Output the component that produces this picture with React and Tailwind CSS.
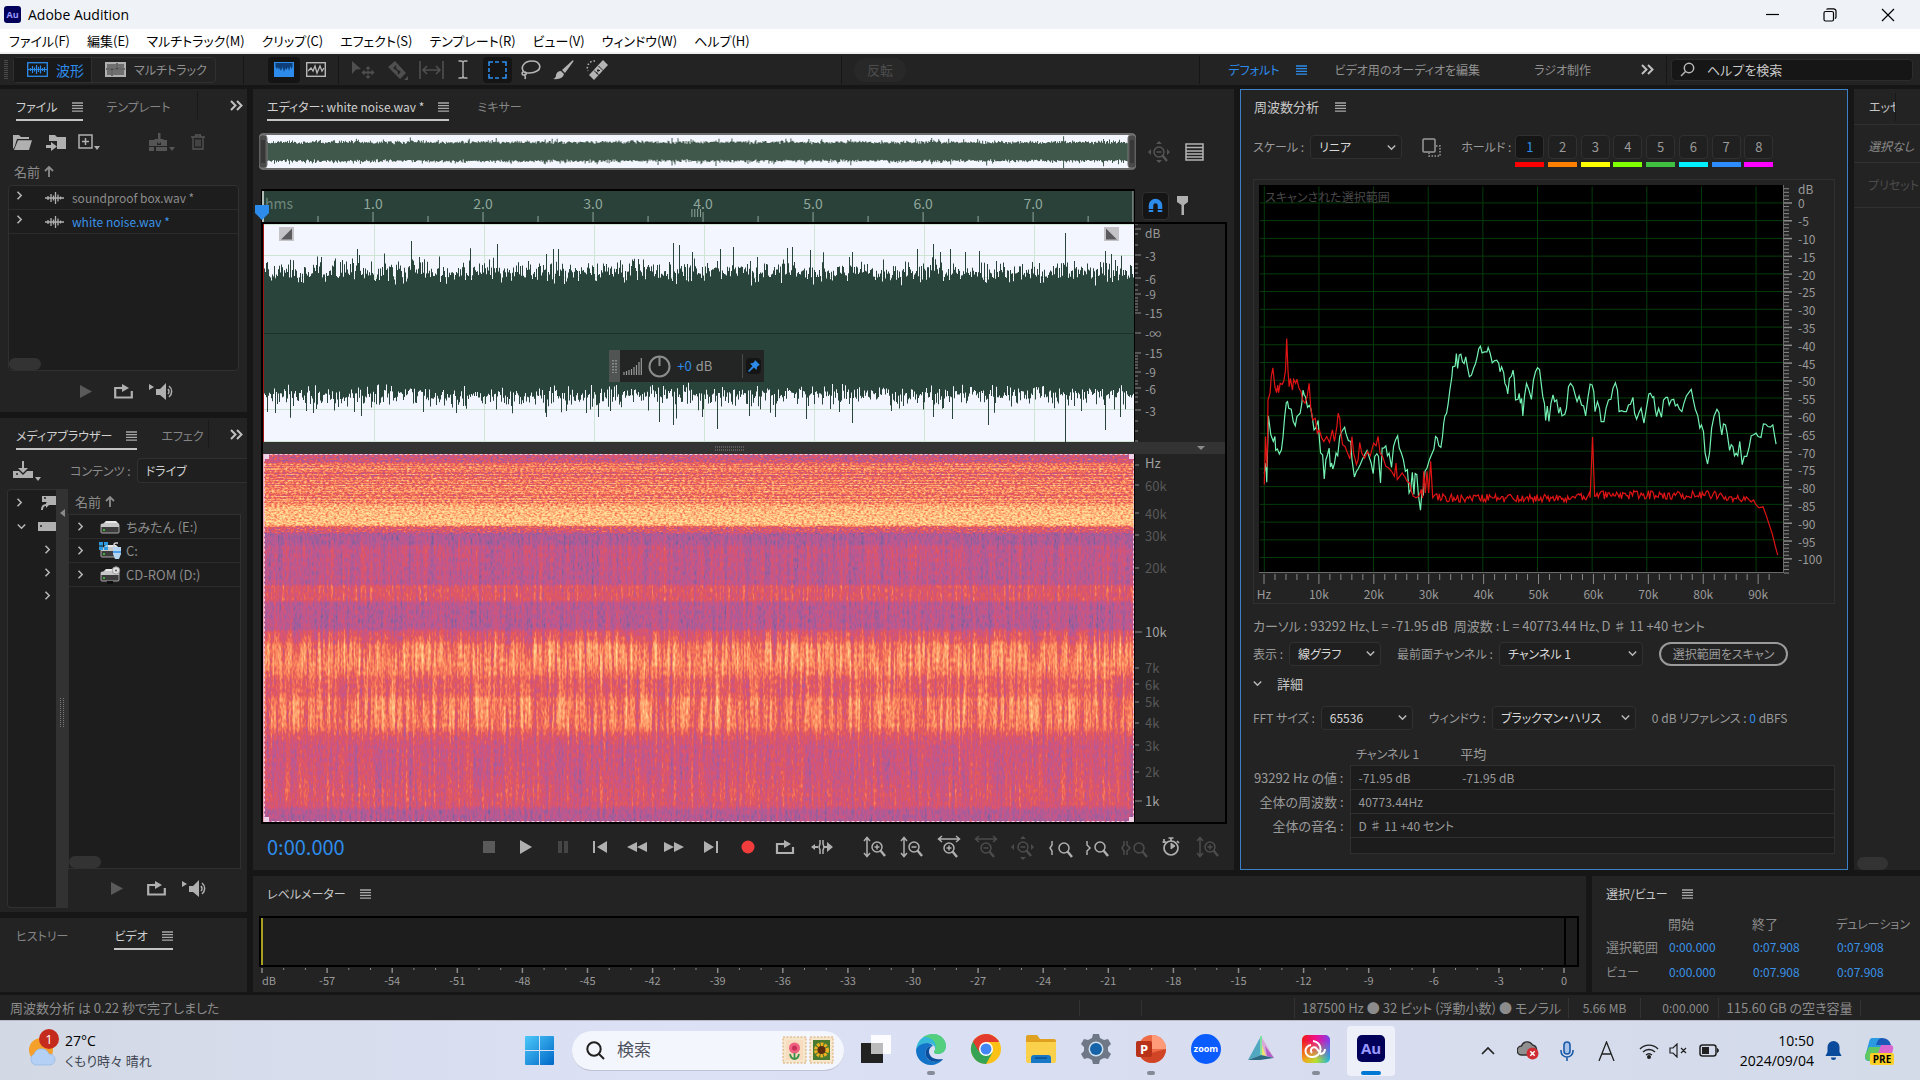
import React from "react";

/* ---------- data ---------- */

function makeRandom(seed) {
  let s = seed;
  return () => {
    s = (s * 1664525 + 1013904223) % 4294967296;
    return s / 4294967296;
  };
}

const SPIKES_UP = { 43: 224, 147: 240, 233: 243, 282: 253, 289: 248, 294: 248, 409: 242, 415: 244, 428: 251, 456: 248, 523: 247, 528: 246, 546: 249, 588: 251, 653: 248, 669: 243, 686: 248, 715: 250, 801: 232, 841: 250 };
const SPIKES_DOWN = { 42: 410, 49: 412, 90: 411, 159: 411, 192: 412, 282: 416, 322: 412, 334: 416, 395: 421, 409: 424, 438: 416, 453: 428, 485: 415, 511: 416, 542: 418, 588: 422, 669: 416, 688: 418, 724: 424, 801: 441, 841: 429, 856: 416 };

function waveformPath() {
  const rnd = makeRandom(77);
  let top = "M0 109";
  let bottom = "";
  for (let x = 0; x < 870; x++) {
    const a = rnd() + rnd() + rnd();
    const b = rnd();
    let y = 49 + (a - 1.5) * 10 - Math.pow(b, 8) * 16;
    if (SPIKES_UP[x] && x > 50) y = SPIKES_UP[x] - 223;
    top += `L${x} ${y.toFixed(1)}L${x + 1} ${y.toFixed(1)}`;
    const c = rnd() + rnd() + rnd();
    const d = rnd();
    let z = 170 + (c - 1.5) * 9 + Math.pow(d, 8) * 17;
    if (SPIKES_DOWN[x]) z = SPIKES_DOWN[x] - 223;
    bottom = `L${x + 1} ${z.toFixed(1)}L${x} ${z.toFixed(1)}` + bottom;
  }
  return `${top}${bottom}Z`;
}
const WAVE = waveformPath();

function spectrogramStripes() {
  const rnd = makeRandom(5);
  const out = [];
  for (let y = 11; y < 50; y += 1) {
    const v = rnd();
    out.push({ y, light: v > 0.5, o: Math.abs(v - 0.5) * 0.5 });
  }
  return out;
}
const STRIPES = spectrogramStripes();

const GREEN =
  "62,912 66,880 68,938 72,738 78,795 84,815 88,800 90,842 94,838 99,853 104,840 108,800 112,740 116,698 119,695 122,715 128,718 133,755 138,768 142,740 150,730 154,700 157,660 160,675 163,680 168,712 172,706 176,716 180,745 184,780 188,775 194,752 196,790 200,850 205,855 209,928 213,870 217,855 221,835 224,892 227,880 230,898 234,882 238,850 242,858 247,800 252,785 259,772 262,790 268,812 274,815 277,870 283,922 288,905 292,898 297,885 303,868 308,855 314,842 320,865 324,880 329,912 333,860 338,852 342,860 347,940 351,835 355,835 360,828 364,858 368,850 374,893 379,830 384,810 389,798 393,835 398,850 403,870 408,905 413,900 417,970 421,960 425,908 429,975 432,912 436,915 440,978 445,1022 449,960 452,978 456,905 461,895 467,870 472,855 478,838 482,800 486,805 490,828 495,833 499,800 502,760 505,738 509,730 513,700 517,660 522,620 524,590 530,588 533,550 536,595 540,555 544,552 548,575 552,580 556,560 560,590 565,620 570,615 575,595 580,580 584,560 588,535 592,528 596,548 602,545 608,545 611,532 616,550 621,578 626,572 632,570 637,580 640,605 644,590 649,608 652,640 656,650 659,672 663,625 668,618 672,600 675,625 678,690 684,688 687,670 690,700 693,685 696,738 700,680 705,640 711,660 717,688 722,630 727,605 732,593 737,598 741,640 745,680 749,700 752,752 756,708 760,755 765,700 770,675 774,695 779,690 784,730 788,712 792,738 799,733 803,715 808,650 813,640 819,650 825,678 829,695 834,678 840,705 845,708 850,738 856,680 861,642 866,645 870,665 873,725 879,695 884,715 888,755 895,755 900,715 906,690 912,688 917,655 923,638 928,660 932,725 938,722 944,725 950,725 955,705 960,703 966,682 970,730 975,748 981,728 986,715 993,760 999,715 1005,672 1009,670 1014,683 1017,680 1021,720 1024,740 1029,715 1036,742 1041,690 1047,682 1051,682 1055,705 1060,690 1066,688 1070,708 1075,703 1080,718 1086,725 1091,700 1097,678 1103,668 1109,658 1114,690 1119,718 1125,738 1130,775 1134,765 1139,785 1143,850 1149,883 1154,848 1159,775 1165,738 1172,718 1177,728 1180,765 1184,795 1188,762 1193,765 1197,790 1203,842 1207,825 1211,830 1215,858 1219,850 1223,858 1228,815 1234,885 1239,860 1245,860 1251,832 1256,798 1262,795 1268,790 1273,800 1280,803 1286,762 1292,763 1297,770 1303,772 1309,765 1313,795 1317,823";

function redCurve() {
  const rnd = makeRandom(31);
  const head =
    "62,945 65,800 68,893 70,820 71,690 76,670 79,620 83,593 88,650 92,668 95,645 97,668 101,640 106,643 110,632 114,600 117,505 120,600 123,650 126,625 131,660 134,628 139,640 142,627 147,655 152,665 156,690 162,700 167,680 172,640 176,715 181,750 187,745 192,790 197,780 203,805 208,815 215,800 222,818 229,780 234,815 240,770 243,730 247,745 250,790 254,825 260,830 266,850 272,868 277,800 281,850 288,885 292,870 296,818 301,850 308,865 315,845 322,858 330,820 336,828 341,800 346,850 352,860 360,890 367,895 374,905 381,920 385,880 388,930 394,920 400,910 407,922 412,935 418,940 422,962 427,980 434,985 441,980 447,960 450,985 453,905 457,970 461,905 465,970 470,875 475,985";
  const mid = [];
  for (let x = 479; x < 1245; x += 3) {
    if (x > 860 && x < 874) continue;
    const base = x < 860 ? 985 : x < 1160 ? 976 : 976 + (x - 1160) / 5;
    mid.push([x, Math.round(base + (rnd() - 0.5) * 26)]);
  }
  mid.push([861, 985], [867, 802], [872, 980]);
  mid.sort((p, q) => p[0] - q[0]);
  const tail = "1250,990 1256,997 1262,991 1267,1005 1275,1015 1285,1012 1292,1035 1300,1065 1308,1095 1316,1135 1321,1157";
  return `${head} ${mid.map((p) => p.join(",")).join(" ")} ${tail}`;
}
const RED = redCurve();

/* ---------- small pieces ---------- */

const MenuIcon = ({ className = "" }) => (
  <svg className={`shrink-0 ${className}`} width="11" height="10" viewBox="0 0 11 10" stroke="currentColor" strokeWidth="1.3" aria-hidden="true">
    <path d="M0 1h11M0 3.7h11M0 6.4h11M0 9.1h11" />
  </svg>
);

const MoreIcon = () => (
  <svg width="13" height="11" viewBox="0 0 13 11" fill="none" stroke="#c0c0c0" strokeWidth="2">
    <path d="M1 1l4.5 4.5L1 10M7 1l4.5 4.5L7 10" />
  </svg>
);

const Chevron = ({ down }) => (
  <svg className="shrink-0" width="9" height="9" viewBox="0 0 9 9" fill="none" stroke="#b8b8b8" strokeWidth="1.5">
    <path d={down ? "M0.8 2.5l3.7 3.7 3.7-3.7" : "M2.5 0.8l3.7 3.7-3.7 3.7"} />
  </svg>
);

const SortArrow = () => (
  <svg width="10" height="11" viewBox="0 0 10 11" fill="none" stroke="#8c8c8c" strokeWidth="1.8">
    <path d="M5 11V1.5M1 5l4-4 4 4" />
  </svg>
);

const FileWave = () => (
  <svg width="19" height="12" viewBox="0 0 19 12" stroke="#b0b0b0" strokeWidth="1.3">
    <path d="M0 6h19M3 4v4M6 2v8M8.500 3.500v5M10.500 0v12M13 2.500v7M15.500 4.500v3" />
  </svg>
);

const PlayIcon = ({ dim }) => (
  <svg width="12" height="13" viewBox="0 0 12 13" fill={dim ? "#5a5a5a" : "#b0b0b0"}>
    <path d="M0 0l12 6.500L0 13z" />
  </svg>
);

const LoopIcon = () => (
  <svg width="19" height="15" viewBox="0 0 19 15">
    <path d="M6 4H1.200v9.500h16.600V7" fill="none" stroke="#b0b0b0" strokeWidth="2.200" />
    <path d="M5 4h4" stroke="#b0b0b0" strokeWidth="2.200" />
    <path d="M8 0l7 4-7 4z" fill="#b0b0b0" />
  </svg>
);

const SpeakerIcon = () => (
  <svg width="27" height="17" viewBox="0 0 27 17">
    <path d="M0 1l5 3-5 3zM7 6h4l6-6v17l-6-5H7z" fill="#b0b0b0" />
    <path d="M19 6a4 4 0 010 5M20 3a7 7 0 010 11" fill="none" stroke="#b0b0b0" strokeWidth="1.500" />
  </svg>
);

function Dropdown({ id, label, value, className }) {
  return (
    <div className="flex items-center gap-[6px] text-[12px]">
      <label htmlFor={id} className="whitespace-nowrap">{label}</label>
      <div className={`relative h-6 ${className}`}>
        <select id={id} className="h-full w-full appearance-none rounded-sm border border-[#303030] bg-[#1f1f1f] pl-2 leading-4 text-[#d8d8d8]">
          <option>{value}</option>
        </select>
        <span className="pointer-events-none absolute inset-y-0 right-1.5 flex items-center">
          <Chevron down />
        </span>
      </div>
    </div>
  );
}

function Tab({ children, active, menu, className = "" }) {
  return (
    <button className={`flex h-8 shrink-0 items-center gap-[14px] whitespace-nowrap border-b-2 pt-1.5 text-[12px] ${active ? "border-[#c4c4c4] text-[#d0d0d0]" : "border-transparent text-[#858585]"} ${className}`}>
      {children}
      {menu && <MenuIcon className="text-[#a8a8a8]" />}
    </button>
  );
}

const Title = ({ children, small }) => (
  <h2 className={`flex items-center whitespace-nowrap text-[#c8c8c8] ${small ? "gap-[14px] text-[12px]" : "gap-4"}`}>
    {children}
    <MenuIcon className="text-[#a8a8a8]" />
  </h2>
);

/* ---------- title, menu and tool bars ---------- */

function TitleBar() {
  return (
    <header className="flex h-[29px] shrink-0 items-center justify-between bg-[#eff3f8] font-['Open_Sans'] text-black">
      <div className="flex items-center gap-[7px] pl-1">
        <svg width="17" height="17" viewBox="0 0 17 17">
          <rect width="17" height="17" rx="3" fill="#00005b" />
          <text x="8.500" y="12" textAnchor="middle" fontSize="9" fontWeight="700" fill="#9999ff" fontFamily="Open Sans">Au</text>
        </svg>
        <h1 className="text-sm">Adobe Audition</h1>
      </div>
      <div className="flex items-center gap-11 pr-[25px]">
        <button aria-label="最小化">
          <svg width="13" height="13" viewBox="0 0 13 13" stroke="#000" strokeWidth="1.200"><path d="M0 6.500h13" /></svg>
        </button>
        <button aria-label="元に戻す">
          <svg width="14" height="14" viewBox="0 0 14 14" fill="none" stroke="#000" strokeWidth="1.200">
            <rect x="1" y="3.500" width="9.500" height="9.500" rx="1.500" />
            <path d="M3.500 1.500Q4 0.800 5 0.800h5.500a2.500 2.500 0 012.500 2.500V9q0 1-1 1.500" />
          </svg>
        </button>
        <button aria-label="閉じる">
          <svg width="14" height="14" viewBox="0 0 14 14" stroke="#000" strokeWidth="1.200"><path d="M1 1l12 12M13 1L1 13" /></svg>
        </button>
      </div>
    </header>
  );
}

function MenuBar() {
  const items = ["ファイル(F)", "編集(E)", "マルチトラック(M)", "クリップ(C)", "エフェクト(S)", "テンプレート(R)", "ビュー(V)", "ウィンドウ(W)", "ヘルプ(H)"];
  return (
    <nav className="flex h-[25px] shrink-0 items-center gap-[17px] border-b-2 border-[#f0f0f0] bg-white pl-[9px] text-[13px] text-black">
      {items.map((t) => (
        <button key={t} className="whitespace-nowrap">{t}</button>
      ))}
    </nav>
  );
}

const ToolSep = ({ className = "" }) => <span className={`h-7 w-px shrink-0 bg-[#161616] ${className}`} />;

function ToolBar() {
  return (
    <div className="flex h-[31px] shrink-0 items-center bg-[#232323] text-[14px]">
      <svg className="ml-1 shrink-0" width="4" height="20" viewBox="0 0 4 20"><path d="M2 0v20" stroke="#4a4a4a" strokeWidth="4" strokeDasharray="1 1" /></svg>
      <div className="ml-[5px] flex h-[26px] shrink-0 rounded border border-[#303030]">
        <button className="flex w-[77px] items-center gap-2 bg-[#191919] pl-[13px] text-[#2d8ceb]">
          <svg width="21" height="15" viewBox="0 0 21 15" fill="none" stroke="currentColor">
            <rect x="0.700" y="0.700" width="19.600" height="13.600" strokeWidth="1.300" />
            <path d="M1 7.500h19M3.500 6v3M5.500 4v7M7.500 5.500v4M9.500 3v9M11.500 5v5M13.500 3.500v8M15.500 6v3M17.500 5v5" strokeWidth="1.200" />
          </svg>
          波形
        </button>
        <button className="flex w-[124px] items-center gap-2 whitespace-nowrap border-l border-[#303030] pl-[13px] text-[12px] text-[#909090]">
          <svg className="shrink-0" width="21" height="15" viewBox="0 0 21 15">
            <rect width="21" height="15" fill="#b0b0b0" />
            <path d="M2 2h9v4H2zM13 2h6v4h-6zM2 8h4v5H2zM8 8h11v5H8z" fill="#707070" />
            <path d="M1 7h19M12 1v6M7 7v7" stroke="#1e1e1e" />
          </svg>
          マルチトラック
        </button>
      </div>
      <ToolSep className="ml-[27px]" />
      <button aria-label="スペクトル周波数" className="ml-6 flex h-[26px] w-8 shrink-0 items-center justify-center rounded bg-[#141414]">
        <svg width="20" height="15" viewBox="0 0 20 15">
          <rect x="0.700" y="0.700" width="18.600" height="13.600" fill="#2d8ceb" stroke="#2d8ceb" strokeWidth="1.400" />
          <path d="M1.500 1h17v4l-1 2-1-3-1.500 5-1-4-1.500 3-1-2-1.500 4-1.500-5-1.500 4-1.500-3L5 8 4 5 3 7 1.500 5z" fill="#0f3f78" />
        </svg>
      </button>
      <button aria-label="スペクトルピッチ" className="ml-[6px] shrink-0">
        <svg width="20" height="15" viewBox="0 0 20 15" fill="none" stroke="#b8b8b8">
          <rect x="0.700" y="0.700" width="18.600" height="13.600" strokeWidth="1.400" />
          <path d="M2 9l3-3 2 3 2-5 2 7 3-7 2 5 2-3" strokeWidth="1.300" />
        </svg>
      </button>
      <ToolSep className="ml-3" />
      <div className="ml-3 flex shrink-0 items-center">
        <button aria-label="移動" className="w-9">
          <svg width="24" height="18" viewBox="0 0 24 18" fill="#4f4f4f">
            <path d="M1 0l9 8-5 .5L1 13z" />
            <path d="M17 5l2.500 3h-2v2.500h3v-2l3 3-3 3v-2h-3V15h2L17 18l-2.500-3h2v-2.500h-3v2l-3-3 3-3v2h3V8h-2z" />
          </svg>
        </button>
        <button aria-label="切り取り" className="w-8">
          <svg width="22" height="20" viewBox="0 0 22 20"><path d="M1 7l7-6 11 12-6 6z" fill="#4f4f4f" /><path d="M7 7l6 6M9 6l-2 3M13 11l-2 3" stroke="#232323" strokeWidth="1.500" /><path d="M21 16v4h-4z" fill="#4f4f4f" /></svg>
        </button>
        <button aria-label="スリップ" className="w-7">
          <svg width="25" height="18" viewBox="0 0 25 18" fill="none" stroke="#4f4f4f" strokeWidth="1.600"><path d="M1 0v18M24 0v18M4 9h17M8 5L4 9l4 4M17 5l4 4-4 4" /></svg>
        </button>
        <button aria-label="時間選択" className="w-8">
          <svg className="mx-auto" width="10" height="19" viewBox="0 0 10 19" fill="none" stroke="#b4b4b4" strokeWidth="1.400"><path d="M0.500 1H3q2 0 2 2 0-2 2-2h2.500M5 3v13M0.500 18H3q2 0 2-2 0 2 2 2h2.500" /></svg>
        </button>
        <button aria-label="長方形選択" className="ml-1 flex h-[26px] w-[29px] items-center justify-center rounded bg-[#151515]">
          <svg width="19" height="18" viewBox="0 0 19 18" fill="none" stroke="#2d8ceb" strokeWidth="1.600"><path d="M1 5V1h4M7 1h4M14 1h4v4M18 7v4M18 13v4h-4M11 17H7M5 17H1v-4M1 11V7" /></svg>
        </button>
        <button aria-label="なげなわ選択" className="ml-2">
          <svg width="22" height="20" viewBox="0 0 22 20" fill="none" stroke="#b4b4b4" strokeWidth="1.600"><path d="M5 13C-1 8 4 1 12 1s10 7 5 10-11 2-13 1-3 3 0 3 3-3 1-3M4 15q2 1 1 4" /></svg>
        </button>
        <button aria-label="ブラシ" className="ml-[11px]">
          <svg width="21" height="20" viewBox="0 0 21 20" fill="#b4b4b4"><path d="M20 0q1 1 0 2l-8 11-3-3zM8 11l3 3q-1 6-11 5 3-1 3-4 1-4 5-4z" /></svg>
        </button>
        <button aria-label="スポット修復" className="ml-3">
          <svg width="23" height="20" viewBox="0 0 23 20"><path d="M17 0l5 5-14 15-5-5z" fill="#b4b4b4" /><path d="M12.500 6l4.500 4.500M8 10.500l5 5" stroke="#232323" /><path d="M12 9v3M11 10.500h3M10 12.500l2 1" stroke="#232323" /><path d="M9 1a7 7 0 00-7 10" fill="none" stroke="#b4b4b4" strokeWidth="1.500" strokeDasharray="1.500 2" /></svg>
        </button>
      </div>
      <ToolSep className="ml-[232px]" />
      <button className="ml-3 h-6 shrink-0 rounded-full bg-[#282828] px-[13px] text-[13px] text-[#4c4c4c]">反転</button>
      <ToolSep className="ml-auto" />
      <button className="ml-[28px] flex shrink-0 items-center gap-4 whitespace-nowrap text-[12px] text-[#2d8ceb]">
        デフォルト<MenuIcon />
      </button>
      <button className="ml-7 shrink-0 whitespace-nowrap text-[12px] text-[#909090]">ビデオ用のオーディオを編集</button>
      <button className="ml-[54px] shrink-0 whitespace-nowrap text-[12px] text-[#909090]">ラジオ制作</button>
      <button aria-label="その他" className="ml-[50px] shrink-0"><MoreIcon /></button>
      <ToolSep className="ml-3" />
      <label className="ml-1 mr-[7px] flex h-[22px] w-[242px] items-center gap-3 rounded-sm border border-[#2c2c2c] bg-[#161616] pl-2">
        <svg className="shrink-0" width="15" height="15" viewBox="0 0 15 15" fill="none" stroke="#b8b8b8" strokeWidth="1.500"><circle cx="9" cy="6" r="4.700" /><path d="M5.500 9.500L1 14" /></svg>
        <input type="text" aria-label="ヘルプを検索" placeholder="ヘルプを検索" className="w-full bg-transparent text-[13px] placeholder:text-[#c8c8c8]" />
      </label>
    </div>
  );
}

/* ---------- left column ---------- */

function FilesPanel() {
  return (
    <section className="flex h-[323px] flex-col bg-[#232323]">
      <div className="flex items-center pl-4 pr-1">
        <Tab active menu>ファイル</Tab>
        <Tab className="ml-6">テンプレート</Tab>
        <span className="ml-auto h-7 w-px bg-[#191919]" />
        <button aria-label="その他のタブ" className="ml-8"><MoreIcon /></button>
      </div>
      <div className="mt-[11px] flex h-5 items-center pl-[13px]">
        <button aria-label="ファイルを開く">
          <svg width="19" height="15" viewBox="0 0 19 15" fill="#b0b0b0"><path d="M0 0h6l2 2h8v2H4L1.500 12 0 14zM5 5.200h14L16 15H1z" /></svg>
        </button>
        <button aria-label="読み込み" className="ml-3.5">
          <svg width="20" height="17" viewBox="0 0 20 17" fill="#b0b0b0"><path d="M3 1h6l2 2h9v12h-9V7H3z" /><path d="M0 11h5V8l6 4.500L5 17v-3H0z" /></svg>
        </button>
        <button aria-label="新規ファイル" className="ml-3">
          <svg width="22" height="16" viewBox="0 0 22 16"><path d="M1 1h13v13H1zM7.500 4v7M4 7.500h7" fill="none" stroke="#b0b0b0" strokeWidth="1.500" /><path d="M16 12h6l-3 4z" fill="#b0b0b0" /></svg>
        </button>
        <button aria-label="マルチトラックに挿入" className="ml-auto">
          <svg width="26" height="19" viewBox="0 0 26 19" fill="#555"><path d="M0 7h8v5h4V7h6v6H0zM0 14h5v4H0zM7 14h11v4H7zM9 0h2.500v6h3.500l-5 5-5-5h4zM20 14h6l-3 4z" /></svg>
        </button>
        <button aria-label="削除" className="ml-4 mr-[42px]">
          <svg width="14" height="16" viewBox="0 0 14 16" fill="none" stroke="#555" strokeWidth="1.300"><path d="M0 3h14M4.500 3V1h5v2M2 3v12h10V3M5 5.500v7M7 5.500v7M9 5.500v7" /></svg>
        </button>
      </div>
      <div className="mt-[6px] flex h-[27px] items-center gap-1 pl-[14px] text-[#8c8c8c]">名前<SortArrow /></div>
      <div className="mx-2 flex min-h-0 flex-1 flex-col rounded-sm border border-[#303030] bg-[#1d1d1d]">
        {["soundproof box.wav *", "white noise.wav *"].map((name, i) => (
          <button key={name} className="flex h-6 shrink-0 items-center border-b border-[#2b2b2b] pl-[6px] text-[12px]">
            <span className="mb-1 flex"><Chevron /></span>
            <span className="ml-[21px] mr-2"><FileWave /></span>
            <span className={i === 1 ? "text-[#3a92e8]" : "text-[#8c8c8c]"}>{name}</span>
          </button>
        ))}
        <span className="mt-auto h-3 w-8 rounded-full bg-[#333]" />
      </div>
      <div className="flex h-[41px] items-center gap-[22px] pl-20">
        <button aria-label="再生"><PlayIcon dim /></button>
        <button aria-label="ループ"><LoopIcon /></button>
        <button aria-label="自動再生" className="-ml-1.5"><SpeakerIcon /></button>
      </div>
    </section>
  );
}

const DriveIcon = ({ kind }) => (
  <svg width="22" height="18" viewBox="0 0 22 18">
    <path d="M4 6l3-3h10l3 3z" fill="#e8e8e8" />
    <rect x="2" y="6" width="18" height="9" rx="1" fill="#3c3c3c" stroke="#a8a8a8" />
    <path d="M2 6h18v3H2z" fill="#c8c8c8" />
    <path d="M5 11v2" stroke="#40d040" strokeWidth="1.500" />
    {kind === "c" && (
      <g>
        <path d="M0 0h4v3.500H0zM5 0h4v3.500H5zM0 4.500h4V8H0zM5 4.500h4V8H5z" fill="#2d9be0" />
        <path d="M15 7V3q0-2 2-2h2" stroke="#d0d0d0" strokeWidth="1.500" fill="none" />
        <path d="M14 5h8v7l-2 5h-4l-2-5z" fill="#b4d4f0" />
        <path d="M14 10h8" stroke="#2d8ceb" strokeWidth="1.500" />
      </g>
    )}
    {kind === "cd" && (
      <g>
        <circle cx="17" cy="4.500" r="3.700" fill="#e0e0e0" stroke="#999" />
        <circle cx="17" cy="4.500" r="1" fill="#555" />
        <path d="M8 15h6v3H8z" fill="#101010" />
      </g>
    )}
  </svg>
);

function MediaPanel() {
  const drives = [["ちみたん (E:)", "e"], ["C:", "c"], ["CD-ROM (D:)", "cd"]];
  return (
    <section className="flex min-h-0 flex-1 flex-col bg-[#232323]">
      <div className="flex items-center pl-4 pr-1">
        <Tab active menu>メディアブラウザー</Tab>
        <Tab className="ml-6">エフェク</Tab>
        <span className="ml-1 h-7 w-px bg-[#191919]" />
        <button aria-label="その他のタブ" className="ml-auto"><MoreIcon /></button>
      </div>
      <div className="mt-2 flex h-[25px] items-center overflow-hidden text-[12px] text-[#8c8c8c]">
        <button aria-label="ダウンロード" className="ml-[13px] mr-[29px]">
          <svg width="28" height="20" viewBox="0 0 28 20"><path d="M0 10h6l4 4 4-4h6v7H0z" fill="#b0b0b0" /><path d="M9 0h2v7h4l-5 5-5-5h4z" fill="#b0b0b0" /><path d="M3 13h2" stroke="#232323" strokeWidth="1.500" /><path d="M22 16h6l-3 4z" fill="#b0b0b0" /></svg>
        </button>
        <label htmlFor="contents" className="shrink-0 whitespace-nowrap">コンテンツ :</label>
        <select id="contents" className="ml-[6px] h-full min-w-0 flex-1 appearance-none rounded-l-sm border border-r-0 border-[#303030] bg-[#1f1f1f] pl-2 leading-4 text-[#d0d0d0]">
          <option>ドライブ</option>
        </select>
      </div>
      <div className="mb-1 mt-[6px] flex min-h-0 flex-1 pl-[7px] pr-[6px]">
        <div className="flex w-[49px] flex-col overflow-hidden rounded-l-sm border border-r-0 border-[#303030] bg-[#1d1d1d]">
          <button aria-label="ショートカット" className="flex h-6 items-center justify-between pl-[7px]">
            <Chevron />
            <svg width="16" height="16" viewBox="0 0 16 16" fill="#b0b0b0"><path d="M2 2h14v9H7V8H2z" /><path d="M4 4h2" stroke="#222" strokeWidth="1.500" /><path d="M1 16q0-6 5-6V8l3 3-3 3v-2q-3 0-3 4z" /></svg>
          </button>
          <button aria-label="ドライブ" className="flex h-6 items-center justify-between pl-[9px]">
            <Chevron down />
            <svg width="18" height="9" viewBox="0 0 18 9"><path d="M0 0h18v9H0z" fill="#b0b0b0" /><path d="M3 3v2" stroke="#222" strokeWidth="1.500" /></svg>
          </button>
          {[0, 1, 2].map((i) => (
            <button key={i} aria-label="展開" className="flex h-[23px] items-center pl-[35px]"><Chevron /></button>
          ))}
        </div>
        <div className="flex w-3 flex-col items-center justify-between bg-[#323232] pt-5">
          <svg width="5" height="8" viewBox="0 0 5 8" fill="#8a8a8a"><path d="M5 0v8L0 4z" /></svg>
          <svg width="6" height="30" viewBox="0 0 6 30"><path d="M1.500 0v30M4.500 0v30" stroke="#777" strokeWidth="1" strokeDasharray="1 1" /></svg>
          <span />
        </div>
        <div className="flex min-w-0 flex-1 flex-col">
          <div className="flex h-[25px] items-center gap-1 pl-[7px] text-[#8c8c8c]">名前<SortArrow /></div>
          <div className="flex min-h-0 flex-1 flex-col border border-[#303030] bg-[#1d1d1d]">
            {drives.map(([name, kind]) => (
              <button key={name} className="flex h-6 shrink-0 items-center border-b border-[#2b2b2b] pl-[7px] text-[#8c8c8c]">
                <Chevron />
                <span className="ml-[14px] mr-[5px]"><DriveIcon kind={kind} /></span>
                {name}
              </button>
            ))}
            <span className="mt-auto h-3 w-8 rounded-full bg-[#333]" />
          </div>
          <div className="flex h-[39px] items-center gap-6 pl-[43px]">
            <button aria-label="再生"><PlayIcon dim /></button>
            <button aria-label="ループ"><LoopIcon /></button>
            <button aria-label="自動再生" className="-ml-2"><SpeakerIcon /></button>
          </div>
        </div>
      </div>
    </section>
  );
}

function HistoryPanel() {
  return (
    <section className="flex h-[74px] items-start bg-[#232323] pl-4">
      <Tab>ヒストリー</Tab>
      <Tab active menu className="ml-[46px]">ビデオ</Tab>
    </section>
  );
}

/* ---------- editor ---------- */

const pct = (v) => `${v.toFixed(3)}%`;

function Overview() {
  return (
    <svg className="h-[37px] min-w-0 flex-1 rounded" viewBox="0 0 878 37" preserveAspectRatio="none">
      <rect x="0" y="0" width="878" height="37" rx="4" fill="#6b6b6b" />
      <rect x="4" y="2" width="870" height="33" fill="#f4f6ff" />
      <g transform="translate(4 2) scale(1 .1514)"><path d={WAVE} fill="#40584c" /></g>
      <rect x="0" y="2" width="8" height="33" rx="3" fill="#4a4a4a" stroke="#777" />
      <rect x="870" y="2" width="8" height="33" rx="3" fill="#4a4a4a" stroke="#777" />
      <path d="M3 7v23M5 7v23M873 7v23M875 7v23" stroke="#1e1e1e" strokeWidth="0.800" />
    </svg>
  );
}

function Ruler() {
  const ticks = Array.from({ length: 15 }, (_, i) => (i + 1) / 2);
  return (
    <div className="relative h-[33px] min-w-0 flex-1 border-2 border-b-0 border-black bg-[#294138]">
      <svg className="h-full w-full overflow-visible text-[14px]" fill="#8fa79d">
        <text x="2" y="18" fill="#6e877c">hms</text>
        {ticks.map((t) => (
          <g key={t}>
            <line x1={pct((t / 7.908) * 100)} x2={pct((t / 7.908) * 100)} y1={Number.isInteger(t) ? 21 : 25} y2="31" stroke="#8fa79d" />
            {Number.isInteger(t) && <text x={pct((t / 7.908) * 100)} y="18" textAnchor="middle">{t.toFixed(1)}</text>}
          </g>
        ))}
        <line x1="0" x2="0" y1="0" y2="31" stroke="#b0bcb6" strokeWidth="2" />
        <line x1="100%" x2="100%" y1="0" y2="31" stroke="#b0bcb6" />
        {[0, 1, 2, 3].map((i) => (
          <line key={i} x1={pct(49.3 + i * 0.33)} x2={pct(49.3 + i * 0.33)} y1="18" y2="26" stroke="#8fa79d" />
        ))}
      </svg>
      <svg className="absolute -left-2 top-[14px]" width="14" height="16" viewBox="0 0 14 16"><path d="M0 0h14v8l-7 7-7-7z" fill="#2d8ceb" /></svg>
    </div>
  );
}

function Waveform() {
  const secs = [1, 2, 3, 4, 5, 6, 7];
  return (
    <svg className="h-full w-full" viewBox="0 0 870 218" preserveAspectRatio="none">
      <rect width="870" height="218" fill="#f4f6ff" />
      <g stroke="#cfe5d4">
        {secs.map((t) => <line key={t} x1={t * 110 + 0.5} x2={t * 110 + 0.5} y1="0" y2="218" />)}
        <path d="M0 31.500h870M0 53.500h870M0 185.500h870M0 .5h870M0 217.500h870" />
      </g>
      <path d={WAVE} fill="#29443a" />
      <path d="M0 109.500h870" stroke="#1c3028" />
      <g>
        <rect x="15" y="3" width="15" height="14" fill="#c4c4c8" />
        <path d="M17 15.500L28 4.500v11z" fill="#5a5a5e" />
        <rect x="840" y="3" width="15" height="14" fill="#c4c4c8" />
        <path d="M842 4.500v11h11z" fill="#5a5a5e" />
      </g>
    </svg>
  );
}

const PALETTE = {
  r: "0.30 0.46 0.62 0.74 0.83 0.89 0.96 1 1 1 1",
  g: "0.33 0.37 0.37 0.35 0.33 0.35 0.46 0.60 0.72 0.84 0.90",
  b: "0.52 0.60 0.61 0.57 0.47 0.36 0.35 0.40 0.50 0.56 0.62",
};

const LEVELS = [
  [0, 38], [8, 38], [10, 61], [30, 60], [48, 66], [54, 80], [68, 84], [71, 80], [73, 48], [78, 42], [80, 25], [90, 27], [93, 34],
  [130, 31], [132, 46], [146, 46], [149, 30], [174, 29], [178, 44], [187, 50], [191, 61], [210, 66], [220, 60], [226, 51],
  [240, 51], [246, 61], [272, 60], [282, 45], [292, 39], [320, 39], [340, 44], [352, 42], [356, 29], [368, 27],
];

function Spectrogram() {
  return (
    <svg className="h-full w-full" viewBox="0 0 870 368" preserveAspectRatio="none">
      <defs>
        <linearGradient id="levels" x1="0" y1="0" x2="0" y2="368" gradientUnits="userSpaceOnUse">
          {LEVELS.map(([y, v]) => <stop key={y} offset={y / 368} stopColor={`rgb(${v}%,${v}%,${v}%)`} />)}
        </linearGradient>
        <filter id="upper" x="0" y="0" width="1" height="1" colorInterpolationFilters="sRGB">
          <feTurbulence type="fractalNoise" baseFrequency="0.37 0.61" numOctaves="2" seed="3" />
          <feColorMatrix values="1.6 0 0 0 -.3  1.6 0 0 0 -.3  1.6 0 0 0 -.3  0 0 0 0 1" result="n" />
          <feComposite in="SourceGraphic" in2="n" operator="arithmetic" k2="1" k3="0.5" k4="-0.25" />
          <feComponentTransfer>
            <feFuncR type="table" tableValues={PALETTE.r} /><feFuncG type="table" tableValues={PALETTE.g} /><feFuncB type="table" tableValues={PALETTE.b} />
          </feComponentTransfer>
        </filter>
        <filter id="lower" x="0" y="0" width="1" height="1" colorInterpolationFilters="sRGB">
          <feTurbulence type="fractalNoise" baseFrequency="0.33 0.014" numOctaves="2" seed="8" />
          <feColorMatrix values="1.4 0 0 0 -.2  1.4 0 0 0 -.2  1.4 0 0 0 -.2  0 0 0 0 1" result="streak" />
          <feTurbulence type="fractalNoise" baseFrequency="0.57 0.23" numOctaves="1" seed="12" />
          <feColorMatrix values="0 1.4 0 0 -.2  0 1.4 0 0 -.2  0 1.4 0 0 -.2  0 0 0 0 1" result="fine" />
          <feComposite in="SourceGraphic" in2="streak" operator="arithmetic" k1="0.85" k2="0.57" k3="0" k4="0" result="s" />
          <feComposite in="s" in2="fine" operator="arithmetic" k2="1" k3="0.3" k4="-0.15" />
          <feComponentTransfer>
            <feFuncR type="table" tableValues={PALETTE.r} /><feFuncG type="table" tableValues={PALETTE.g} /><feFuncB type="table" tableValues={PALETTE.b} />
          </feComponentTransfer>
        </filter>
      </defs>
      <g filter="url(#upper)">
        <rect width="870" height="80" fill="url(#levels)" />
        {STRIPES.map((s) => <rect key={s.y} y={s.y} width="870" height="1" fill={s.light ? "#fff" : "#000"} opacity={s.o} />)}
      </g>
      <g filter="url(#lower)"><rect y="80" width="870" height="288" fill="url(#levels)" /></g>
      <rect x="0.500" y="0.500" width="869" height="367" fill="none" stroke="#f0c8dc" strokeDasharray="3 2" />
      <path d="M0 0h5v5H0zM865 0h5v5h-5zM0 363h5v5H0zM865 363h5v5h-5z" fill="#f0d0e6" />
    </svg>
  );
}

function DbScale() {
  const labels = [["dB", 10, 5], ["-3", 33, 31], ["-6", 56, 54], ["-9", 71, 70], ["-15", 90, 89], ["-∞", 111, 109], ["-15", 130, 129], ["-9", 149, 148], ["-6", 166, 164], ["-3", 188, 186]];
  const small = [0, 10, 21, 40, 44, 49, 61, 66, 74, 77, 80, 83, 86, 132, 135, 138, 141, 144, 152, 157, 160, 169, 173, 178, 197, 207, 217];
  return (
    <svg className="h-full w-full text-[12px]" fill="#9a9a9a">
      {small.map((y) => <line key={y} x1="0" x2="3" y1={pct(y / 2.18)} y2={pct(y / 2.18)} stroke="#8a8a8a" />)}
      {labels.map(([t, y, tick]) => (
        <g key={y}>
          <line x1="0" x2="6" y1={pct(tick / 2.18)} y2={pct(tick / 2.18)} stroke="#8a8a8a" />
          <text x="10" y={pct(y / 2.18)} dy="4">{t}</text>
        </g>
      ))}
    </svg>
  );
}

function HzScale() {
  const labels = [["Hz", 10, 11, 1], ["60k", 33, 31, 0], ["40k", 61, 59, 0], ["30k", 83, 81, 0], ["20k", 115, 114, 0], ["10k", 179, 178, 1], ["7k", 215, 214, 0], ["6k", 232, 230, 0], ["5k", 249, 248, 0], ["4k", 270, 269, 0], ["3k", 293, 291, 0], ["2k", 319, 318, 0], ["1k", 348, 347, 1]];
  return (
    <svg className="h-full w-full text-[13px]">
      {labels.map(([t, y, tick, bright]) => (
        <g key={t}>
          <line x1="0" x2={bright && t !== "Hz" ? 7 : 4} y1={pct(tick / 3.68)} y2={pct(tick / 3.68)} stroke="#8a8a8a" />
          <text x="10" y={pct(y / 3.68)} dy="4" fill={bright ? "#a0a0a0" : "#585858"}>{t}</text>
        </g>
      ))}
    </svg>
  );
}

function Hud() {
  return (
    <div className="absolute left-[36%] top-[58%] flex h-8 w-[155px] items-center bg-[#222524] text-[13px]">
      <span className="flex h-full w-[11px] items-center justify-center bg-[#505453]">
        <svg width="5" height="13" viewBox="0 0 5 13"><path d="M1 0v13M4 0v13" stroke="#c0c0c0" strokeDasharray="1.500 1.500" /></svg>
      </span>
      <svg className="ml-[3px]" width="19" height="17" viewBox="0 0 19 17" stroke="#9a9a9a" strokeWidth="1.200">
        <path d="M1 17v-3M3.500 17v-4M6 17v-5M8.500 17v-6M11 17V9M13.500 17V7M16 17V4M18.300 17V0" />
      </svg>
      <svg className="ml-[6px]" width="23" height="23" viewBox="0 0 23 23" fill="none" stroke="#8c8c8c" strokeWidth="2"><circle cx="11.500" cy="11.500" r="10" /><path d="M11.500 2v9" /></svg>
      <span className="ml-[6px] text-[#2d8ceb]">+0</span>
      <span className="ml-1 text-[#9a9a9a]">dB</span>
      <span className="ml-auto h-6 w-px bg-[#4a4a4a]" />
      <button aria-label="固定" className="mx-[3px] flex h-4 w-[15px] items-center justify-center rounded bg-[#151515]">
        <svg width="12" height="12" viewBox="0 0 12 12" fill="#2d8ceb"><path d="M7 0l5 5-1.500.5L9 7l-.5 3L6 7.500 1 12l-1-1 4.500-5L2 3.500 5 3l1.500-1.500z" /></svg>
      </button>
    </div>
  );
}

const B = "#b0b0b0";
const D = "#4c4c4c";
const Mag = ({ c = B, sign }) => (
  <g fill="none" stroke={c} strokeWidth="1.500">
    <circle cx="6" cy="6" r="5" />
    <path d="M9.500 9.500L14 15" strokeWidth="2.400" />
    {sign && <path d={sign === "+" ? "M3.500 6h5M6 3.500v5" : "M3.500 6h5"} />}
  </g>
);
const VArrow = ({ c = B }) => <path d="M3 1v18M0 4l3-3.500L6 4M0 16l3 3.500L6 16" fill="none" stroke={c} strokeWidth="1.500" />;
const HArrow = ({ c = B }) => <path d="M1 2h20M4 -1L.5 2 4 5M18 -1l3.500 3L18 5" fill="none" stroke={c} strokeWidth="1.500" />;

const TRANSPORT = [
  ["停止", <path key="a" d="M5 4h12v12H5z" fill="#5a5a5a" />],
  ["再生", <path key="a" d="M5 3l12 7-12 7z" fill={B} />],
  ["一時停止", <path key="a" d="M6 4h4v12H6zM12 4h4v12h-4z" fill="#454545" />],
  ["先頭へ", <path key="a" d="M4 4h2v12H4zM18 4v12L8 10z" fill={B} />],
  ["早戻し", <path key="a" d="M11 5v10L1 10zM21 5v10l-10-5z" fill={B} />],
  ["早送り", <path key="a" d="M1 5v10l10-5zM11 5v10l10-5z" fill={B} />],
  ["末尾へ", <path key="a" d="M16 4h2v12h-2zM4 4v12l10-6z" fill={B} />],
  ["録音", <circle key="a" cx="11" cy="10" r="6.500" fill="#f03c3c" />],
  ["ループ再生", <g key="a"><path d="M8 7H3v9h16V10" fill="none" stroke={B} strokeWidth="2.200" /><path d="M10 3l7 4-7 4z" fill={B} /><path d="M7 7h4" stroke={B} strokeWidth="2.200" /></g>],
  ["選択をスキップ", <g key="a" fill={B}><path d="M0 10l4-3v6zM4 9h3v2H4zM22 10l-6-5v4h-3v2h3v4z" /><path d="M9 3v4l-1 3 1 3v4M12 3v4l1 3-1 3v4" fill="none" stroke={B} strokeWidth="1.500" /></g>],
];
const ZOOMS = [
  ["振幅ズームイン", <g key="a"><VArrow /><g transform="translate(7 4)"><Mag sign="+" /></g></g>],
  ["振幅ズームアウト", <g key="a"><VArrow /><g transform="translate(7 4)"><Mag sign="-" /></g></g>],
  ["時間ズームイン", <g key="a"><HArrow /><g transform="translate(5 5)"><Mag sign="+" /></g></g>],
  ["時間ズームアウト", <g key="a"><HArrow c={D} /><g transform="translate(5 5)"><Mag c={D} sign="-" /></g></g>],
  ["全体表示", <g key="a"><g transform="translate(5 4)"><Mag c={D} sign="-" /></g><path d="M8 2l3-3 3 3zM8 20l3 3 3-3zM2 7l-3 3 3 3zM19 7l3 3-3 3z" fill={D} /></g>],
  ["インポイント", <g key="a"><path d="M3 4v4l-2 3 2 3v4" fill="none" stroke={B} strokeWidth="1.500" /><g transform="translate(9 5)"><Mag /></g></g>],
  ["アウトポイント", <g key="a"><path d="M1 4v4l3 3-3 3v4" fill="none" stroke={B} strokeWidth="1.500" /><g transform="translate(8 4)"><Mag /></g></g>],
  ["選択範囲ズーム", <g key="a"><path d="M1 4v4l-2 3 2 3v4M4 4v4l3 3-3 3v4" fill="none" stroke={D} strokeWidth="1.500" /><g transform="translate(10 5)"><Mag c={D} /></g></g>],
  ["タイマー", <g key="a" fill="none" stroke={B} strokeWidth="1.700"><circle cx="11" cy="11" r="7" /><path d="M11 4V1M8.500 1h5M4 2v4M2.500 5h4M17 4l2 2" /><path d="M11 12V6l4 3z" fill={B} strokeWidth="1" /></g>],
  ["周波数ズーム", <g key="a"><VArrow c={D} /><g transform="translate(7 4)"><Mag c={D} sign="+" /></g></g>],
];

const IconRow = ({ items }) => (
  <div className="flex gap-[15px]">
    {items.map(([label, art]) => (
      <button key={label} aria-label={label}>
        <svg className="overflow-visible" width="22" height="20" viewBox="0 0 22 20">{art}</svg>
      </button>
    ))}
  </div>
);

function Editor() {
  return (
    <section className="flex min-w-0 flex-1 flex-col bg-[#232323]">
      <div className="flex items-center pl-[14px]">
        <Tab active menu>エディター: white noise.wav *</Tab>
        <Tab className="ml-7">ミキサー</Tab>
      </div>
      <div className="mt-3 flex items-center pl-[6px]">
        <Overview />
        <div className="flex w-[98px] shrink-0 items-center gap-[15px] pl-3">
          <button aria-label="ズームをリセット">
            <svg width="22" height="22" viewBox="0 0 22 22"><g transform="translate(5 5)"><Mag c="#555" sign="-" /></g><path d="M8 3l3-3 3 3zM8 19l3 3 3-3zM3 8l-3 3 3 3zM19 8l3 3-3 3z" fill="#555" /></svg>
          </button>
          <button aria-label="表示形式">
            <svg width="19" height="18" viewBox="0 0 19 18" fill="none" stroke="#b4b4b4" strokeWidth="1.500"><path d="M1 1h17v16H1zM1 4.500h17M1 8h17M1 11h17M1 14h17" /></svg>
          </button>
        </div>
      </div>
      <div className="mt-[19px] flex items-center pl-2">
        <Ruler />
        <div className="flex w-[99px] shrink-0 items-center gap-2 pl-[7px]">
          <button aria-label="スナップ" className="flex h-7 w-[27px] items-center justify-center rounded border border-[#303030] bg-[#151515]">
            <svg width="15" height="15" viewBox="0 0 15 15" fill="none" stroke="#2d8ceb" strokeWidth="4.500"><path d="M3 14V7.500a4.500 4.500 0 019 0V14" /><path d="M0 11.500h6M9 11.500h6" stroke="#151515" strokeWidth="1" /></svg>
          </button>
          <button aria-label="マーカー">
            <svg width="11" height="19" viewBox="0 0 11 19" fill="#b0b0b0"><path d="M0 0h11v6l-4 3v10H4.500V9L0 6z" /></svg>
          </button>
        </div>
      </div>
      <div className="ml-2 mr-[7px] flex min-h-0 flex-1 flex-col border-2 border-black">
        <div className="relative flex min-h-0 flex-[218]">
          <div className="h-full min-w-0 flex-1 border-l border-[#a01414]"><Waveform /></div>
          <div className="h-full w-[91px] border-l border-black"><DbScale /></div>
          <Hud />
        </div>
        <div className="flex h-3 shrink-0 items-center bg-[#333]">
          <svg className="mx-auto" width="30" height="5" viewBox="0 0 30 5"><path d="M0 1h30M0 4h30" stroke="#8a8a8a" strokeDasharray="1 1" /></svg>
          <svg className="mr-5" width="8" height="4" viewBox="0 0 8 4" fill="#8a8a8a"><path d="M0 0h8L4 4z" /></svg>
        </div>
        <div className="flex min-h-0 flex-[368]">
          <div className="h-full min-w-0 flex-1 border-l border-[#e8a0b4]"><Spectrogram /></div>
          <div className="h-full w-[91px] border-l border-black"><HzScale /></div>
        </div>
      </div>
      <div className="flex h-[46px] shrink-0 items-center justify-between pl-[14px] pr-[15px]">
        <output className="text-[20px] text-[#2d8ceb]">0:00.000</output>
        <div className="flex items-center gap-[31px]">
          <IconRow items={TRANSPORT} />
          <IconRow items={ZOOMS} />
        </div>
      </div>
    </section>
  );
}

/* ---------- frequency analysis ---------- */

function FrequencyGraph() {
  const dbs = Array.from({ length: 21 }, (_, i) => i * 5);
  const yOf = (db) => 18 + db * 3.563;
  const xOf = (k) => 5 + k * 5.48;
  return (
    <div className="grid flex-1 grid-cols-[1fr_50px] grid-rows-[1fr_30px] border border-[#303030] pl-[5px] pt-[5px]">
      <div className="relative min-h-0 border-b border-r border-[#6a6a6a] bg-black">
        <svg className="absolute inset-0 h-full w-full" viewBox="49 42 1285 1165" preserveAspectRatio="none" fill="none">
          <g stroke="#063c0a" strokeWidth="1">
            {dbs.map((d) => <line key={d} x1="51" x2="1334" y1={96 + d * 10.69} y2={96 + d * 10.69} vectorEffect="non-scaling-stroke" />)}
            {Array.from({ length: 10 }, (_, i) => <line key={i} x1={62 + i * 134} x2={62 + i * 134} y1="46" y2="1207" vectorEffect="non-scaling-stroke" />)}
          </g>
          <polyline points={GREEN} stroke="#74f2b4" strokeWidth="1.200" vectorEffect="non-scaling-stroke" />
          <polyline points={RED} stroke="#e01414" strokeWidth="1.200" vectorEffect="non-scaling-stroke" />
        </svg>
        <span className="absolute left-1.5 top-0.5 text-[12px] text-[#484848]">スキャンされた選択範囲</span>
      </div>
      <svg className="h-full w-full overflow-visible text-[12px]" fill="#9a9a9a">
        {Array.from({ length: 109 }, (_, i) => i - 4).map((d) => (
          <line key={d} x1="0" x2={d % 5 === 0 && d >= 0 ? 8 : 5} y1={pct(yOf(d) / 3.88)} y2={pct(yOf(d) / 3.88)} stroke="#8a8a8a" strokeWidth={d % 5 === 0 ? 1.5 : 1} />
        ))}
        <text x="14" y="9">dB</text>
        {dbs.map((d) => <text key={d} x="14" y={pct((yOf(d) + 5.5) / 3.88)}>{d ? -d : 0}</text>)}
      </svg>
      <svg className="h-full w-full overflow-visible text-[12px]" fill="#9a9a9a">
        {Array.from({ length: 47 }, (_, i) => i * 2).map((k) => (
          <line key={k} x1={pct(xOf(k) / 5.24)} x2={pct(xOf(k) / 5.24)} y1="1" y2={k % 10 === 0 ? 11 : 7} stroke="#8a8a8a" />
        ))}
        <text x={pct(5 / 5.24)} y="26" textAnchor="middle">Hz</text>
        {[10, 20, 30, 40, 50, 60, 70, 80, 90].map((k) => <text key={k} x={pct(xOf(k) / 5.24)} y="26" textAnchor="middle">{k}k</text>)}
      </svg>
    </div>
  );
}

const HOLDS = ["bg-[#ff0000]", "bg-[#ff8000]", "bg-[#ffff00]", "bg-[#80ff00]", "bg-[#40c040]", "bg-[#00f0ff]", "bg-[#2d8cff]", "bg-[#ff00ff]"];

function FrequencyPanel() {
  return (
    <section className="flex w-[608px] shrink-0 flex-col border border-[#3c80c8] bg-[#232323] px-3 pb-[15px] text-[#9a9a9a]">
      <div className="h-8 pl-px pt-[7px]"><Title>周波数分析</Title></div>
      <div className="mt-[5px] flex items-center">
        <Dropdown id="scale" label="スケール :" value="リニア" className="w-[92px]" />
        <button aria-label="グラフをコピー" className="ml-5">
          <svg width="19" height="19" viewBox="0 0 19 19" fill="none" stroke="#9a9a9a" strokeWidth="1.500"><rect x="1" y="1" width="12" height="13" rx="1" /><path d="M14 8h4v10H7v-3" strokeDasharray="1.500 1.500" /></svg>
        </button>
        <span className="ml-5 mr-1 text-[12px]">ホールド :</span>
        <div className="flex w-[258px] justify-between pt-2">
          {HOLDS.map((c, i) => (
            <button key={c} className="flex w-[29px] flex-col gap-[3px]">
              <span className={`flex h-6 items-center justify-center rounded-sm border border-[#303030] ${i === 0 ? "bg-[#151515] text-[#2d8ceb]" : "bg-[#202020]"}`}>{i + 1}</span>
              <span className={`h-[5px] ${c}`} />
            </button>
          ))}
        </div>
      </div>
      <div className="mt-3 flex min-h-0 flex-1"><FrequencyGraph /></div>
      <p className="mt-3 whitespace-pre">カーソル : 93292 Hz、L = -71.95 dB  周波数 : L = 40773.44 Hz、D ♯ 11 +40 セント</p>
      <div className="mt-1.5 flex items-center gap-4">
        <Dropdown id="view" label="表示 :" value="線グラフ" className="w-[92px]" />
        <Dropdown id="front" label="最前面チャンネル :" value="チャンネル 1" className="w-[144px]" />
        <button className="h-6 whitespace-nowrap rounded-full border-2 border-[#9a9a9a] px-3 text-[12px] leading-4">選択範囲をスキャン</button>
      </div>
      <button className="mt-2 flex h-5 items-center gap-[15px] self-start text-[#c4c4c4]"><Chevron down />詳細</button>
      <div className="mt-3 flex items-center gap-4">
        <Dropdown id="fft" label="FFT サイズ :" value="65536" className="w-[92px]" />
        <Dropdown id="window" label="ウィンドウ :" value="ブラックマン・ハリス" className="w-[144px]" />
        <p className="whitespace-nowrap text-[12px]">0 dB リファレンス : <span className="text-[#2d8ceb]">0</span> dBFS</p>
      </div>
      <table className="mt-[13px] w-full text-left">
        <thead>
          <tr className="h-[23px]">
            <td className="w-[97px]" />
            <th className="w-[100px] pl-[6px] text-[12px] font-normal">チャンネル 1</th>
            <th className="pl-[6px] font-normal">平均</th>
          </tr>
        </thead>
        <tbody>
          {[["93292 Hz の値 :", "-71.95 dB", "-71.95 dB"], ["全体の周波数 :", "40773.44Hz", ""], ["全体の音名 :", "D ♯ 11 +40 セント", ""]].map((r) => (
            <tr key={r[0]} className="h-6">
              <th className="whitespace-nowrap pr-[6px] text-right font-normal">{r[0]}</th>
              <td className="whitespace-nowrap border border-r-0 border-[#303030] bg-[#1c1c1c] pl-2 text-[12px]">{r[1]}</td>
              <td className="border border-l-0 border-[#303030] bg-[#1c1c1c] pl-2 text-[12px]">{r[2]}</td>
            </tr>
          ))}
          <tr className="h-4">
            <td />
            <td colSpan="2" className="border border-[#303030] bg-[#1c1c1c]" />
          </tr>
        </tbody>
      </table>
    </section>
  );
}

function EssentialPanel() {
  return (
    <section className="flex w-[66px] shrink-0 flex-col overflow-hidden whitespace-nowrap bg-[#232323] text-[12px] text-[#8c8c8c]">
      <div className="flex h-9 items-center border-b border-[#303030]">
        <span className="ml-[15px] w-[26px] overflow-hidden text-[#c4c4c4]">エッセ</span>
        <span className="h-7 w-px bg-[#191919]" />
      </div>
      <div className="flex h-[38px] items-center border-b border-[#303030] pl-[14px] pt-1 italic">選択なし</div>
      <div className="flex h-[45px] items-center border-b border-[#303030] pl-[14px] text-[#4c4c4c]">プリセット</div>
      <span className="ml-[3px] mt-auto h-[13px] w-[31px] shrink-0 rounded-full bg-[#333]" />
    </section>
  );
}

/* ---------- bottom panels ---------- */

function LevelMeter() {
  const xs = Array.from({ length: 61 }, (_, i) => i);
  return (
    <section className="flex min-w-0 flex-1 flex-col bg-[#232323] pl-[6px] pr-[7px] text-[#9a9a9a]">
      <div className="flex h-10 items-center pb-1 pl-2"><Title small>レベルメーター</Title></div>
      <div className="flex h-[51px] shrink-0 border-2 border-black bg-[#1d1d1d]">
        <span className="w-0.5 bg-[#a8a020]" />
        <span className="ml-auto mr-[11px] w-0.5 bg-black" />
      </div>
      <svg className="h-[24px] w-full overflow-visible text-[11px]" fill="#9a9a9a">
        {xs.map((i) => {
          const x = pct((3 + i * 21.7) / 13.2);
          const major = i % 3 === 0;
          return (
            <g key={i}>
              <line x1={x} x2={x} y1="1" y2={major ? 6 : 3} stroke="#8a8a8a" strokeWidth={major ? 1.5 : 1} />
              {major && <text x={x} y="18" textAnchor={i ? "middle" : "start"}>{i ? i - 60 : "dB"}</text>}
            </g>
          );
        })}
      </svg>
    </section>
  );
}

function SelectionPanel() {
  return (
    <section className="w-[328px] shrink-0 bg-[#232323] pl-[14px] text-[#8c8c8c]">
      <div className="flex h-9 items-center"><Title small>選択/ビュー</Title></div>
      <table className="w-full whitespace-nowrap text-left">
        <thead>
          <tr className="h-6">
            <td className="w-[62px]" /><th className="w-[84px] font-normal">開始</th><th className="w-[84px] font-normal">終了</th><th className="text-[12px] font-normal">デュレーション</th>
          </tr>
        </thead>
        <tbody>
          {["選択範囲", "ビュー"].map((name, row) => (
            <tr key={name} className={row ? "h-7" : "h-[22px]"}>
              <th className={`font-normal ${row ? "text-[12px]" : ""}`}>{name}</th>
              {["0:00.000", "0:07.908", "0:07.908"].map((v, i) => <td key={i} className="pl-px text-[12px] text-[#3a92e8]">{v}</td>)}
            </tr>
          ))}
        </tbody>
      </table>
    </section>
  );
}

function StatusBar() {
  const sep = "border-l border-[#333]";
  return (
    <footer className="flex h-[25px] shrink-0 items-center bg-[#232323] pl-[10px] text-[#8c8c8c]">
      <span className="mr-auto">周波数分析 は 0.22 秒で完了しました</span>
      <span className={`${sep} h-4 w-[62px]`} />
      <span className={`${sep} h-4 w-[153px]`} />
      <span className={`${sep} flex w-[274px] justify-center gap-[3px] whitespace-nowrap`}><span>187500 Hz</span>●<span>32 ビット (浮動小数)</span>●<span>モノラル</span></span>
      <span className={`${sep} w-[72px] text-center text-[12px]`}>5.66 MB</span>
      <span className={`${sep} w-[78px] pr-[9px] text-right text-[12px]`}>0:00.000</span>
      <span className={`${sep} w-[142px] whitespace-nowrap text-center`}>115.60 GB の空き容量</span>
      <span className={`${sep} h-4 w-[60px]`} />
    </footer>
  );
}

/* ---------- desktop task bar ---------- */

const APPS = [
  { name: "タスクビュー", art: <g><path d="M1 10h22v20H1z" fill="#222" /><path d="M11 2h20v19H11z" fill="#fff" opacity=".9" /><path d="M11 10h12v11H11z" fill="#bbb" /></g> },
  {
    name: "Edge", dot: true,
    art: (
      <g>
        <path d="M1 17C2 6 11 1 18 1c9 0 13 7 13 12 0 5-4 8-8 8-4 0-5-2-3-4 1-3-2-7-7-7-6 0-11 4-12 7z" fill="#35b8d8" />
        <path d="M18 1c9 0 13 7 13 12 0 5-4 8-8 8-4 0-5-2-3-4 3-7-3-14-12-13 3-2 7-3 10-3z" fill="#5cd468" opacity=".8" />
        <path d="M1 17c1-4 6-7 11-7 3 0 5 1 6 3-6 0-9 5-7 10 2 6 9 7 17 3-3 4-8 6-12 6C7 32 1 25 1 17z" fill="#1273c8" />
        <path d="M18 13c-4 1-5 6-3 9 2 4 8 5 13 4-5 4-14 4-17-3-2-5 1-10 7-10z" fill="#0b4f9c" />
      </g>
    ),
  },
  {
    name: "Chrome",
    art: (
      <g>
        <circle cx="16" cy="16" r="15" fill="#fbc116" />
        <path d="M3 8.500A15 15 0 0016 31l6.500-11.500L16 16z" fill="#34a353" />
        <path d="M16 9h13l-1-2A15 15 0 003 8.500l6.500 11z" fill="#e33b2e" />
        <circle cx="16" cy="16" r="7" fill="#fff" /><circle cx="16" cy="16" r="5.500" fill="#4285f4" />
      </g>
    ),
  },
  { name: "エクスプローラー", art: <g><path d="M1 4q0-2 2-2h9l3 4h14q2 0 2 2v4H1z" fill="#e0a020" /><path d="M1 9h30v19q0 2-2 2H3q-2 0-2-2z" fill="#fbd04a" /><path d="M6 30v-5q0-3 3-3h14q3 0 3 3v5z" fill="#1878c8" /><path d="M10 25h12" stroke="#0a4f90" strokeWidth="1.500" /></g> },
  { name: "設定", art: <g><path d="M13 1h6l1 4 4 2 4-1 3 5-3 3v4l3 3-3 5-4-1-4 2-1 4h-6l-1-4-4-2-4 1-3-5 3-3v-4l-3-3 3-5 4 1 4-2z" fill="#6e7886" /><circle cx="16" cy="16" r="7.500" fill="#cfe0ee" /><circle cx="16" cy="16" r="6" fill="#1563a8" /></g> },
  { name: "PowerPoint", dot: true, art: <g><circle cx="17" cy="16" r="14" fill="#ee6a45" /><path d="M17 2a14 14 0 0114 14H17z" fill="#ff9b78" /><path d="M31 16a14 14 0 01-14 14A14 14 0 015 23z" fill="#d04526" /><rect x="1" y="8" width="16" height="16" rx="2" fill="#b83219" /><text x="9" y="21" textAnchor="middle" fontSize="13" fontWeight="700" fill="#fff" fontFamily="Open Sans">P</text></g> },
  { name: "Zoom", art: <g><circle cx="16" cy="16" r="15" fill="#0b5cff" /><text x="16" y="19" textAnchor="middle" fontSize="9" fontWeight="700" fill="#fff" fontFamily="Open Sans">zoom</text></g> },
  { name: "プリズム", art: <g><path d="M16 3L3 27l13-5z" fill="#4fa8c0" /><path d="M16 3l13 22-13-3z" fill="#d8a8d8" /><path d="M16 9l5 14-5-1z" fill="#f0e070" /><path d="M20 13l9 12-7-2z" fill="#b060c8" /><path d="M3 27l13-5 13 3-14 2z" fill="#2b6a80" /><path d="M16 3v19" stroke="#7fe0a0" strokeWidth="2" /></g> },
  {
    name: "Creative Cloud", dot: true,
    art: (
      <g>
        <defs>
          <linearGradient id="ccTop" x1="0" y1="0" x2="1" y2="0"><stop offset="0" stopColor="#f01818" /><stop offset=".5" stopColor="#f0108c" /><stop offset="1" stopColor="#8040f0" /></linearGradient>
          <linearGradient id="ccLow" x1="0" y1="0" x2="1" y2="0"><stop offset="0" stopColor="#f8a018" /><stop offset=".5" stopColor="#b8e030" /><stop offset="1" stopColor="#18b0e0" /></linearGradient>
          <linearGradient id="ccFade" x1="0" y1="0" x2="0" y2="1"><stop offset=".2" stopColor="#fff" /><stop offset=".9" stopColor="#000" /></linearGradient>
          <mask id="ccMask"><rect x="2" y="2" width="28" height="28" fill="url(#ccFade)" /></mask>
        </defs>
        <rect x="2" y="2" width="28" height="28" rx="5" fill="url(#ccLow)" />
        <rect x="2" y="2" width="28" height="28" rx="5" fill="url(#ccTop)" mask="url(#ccMask)" />
        <path d="M13 8a8 8 0 11-1 16 6 6 0 01-1-12M12 20a3.500 3.500 0 010-5q3-2 5 1l4 5q4-1 4-5" fill="none" stroke="#fff" strokeWidth="2" />
      </g>
    ),
  },
  { name: "Adobe Audition", active: true, art: <g><rect x="2" y="2" width="28" height="27" rx="5" fill="#00005b" /><text x="16" y="21" textAnchor="middle" fontSize="15" fontWeight="700" fill="#9999ff" fontFamily="Open Sans">Au</text></g> },
];

function TaskBar() {
  return (
    <div className="flex h-[60px] shrink-0 items-center border-t border-[#b8bcc8] bg-linear-to-r from-[#d2d9e4] via-[#dce1f6] via-35% to-[#d3dae8] font-['Open_Sans','Noto_Sans_CJK_JP',sans-serif] text-black">
      <button className="ml-7 flex flex-[516] items-center gap-[3px] text-left">
        <svg className="-mt-1 shrink-0" width="34" height="40" viewBox="0 0 34 40">
          <circle cx="13" cy="21" r="12" fill="#f5a02a" />
          <path d="M7 36a6 6 0 01-1-11 8 8 0 0115 0 5.500 5.500 0 011 11z" fill="#b4d0f4" stroke="#8eb2e4" strokeWidth=".6" />
          <circle cx="21" cy="10" r="10" fill="#c42b1c" />
          <text x="21" y="15" textAnchor="middle" fontSize="13" fill="#fff">1</text>
        </svg>
        <span className="text-[14px] leading-5">27°C<br /><span className="text-[13px] text-[#404652]">くもり時々 晴れ</span></span>
      </button>
      <div className="flex shrink-0 items-center">
        <button aria-label="スタート">
          <svg width="29" height="29" viewBox="0 0 29 29">
            <defs><linearGradient id="win" x1="0" y1="0" x2="1" y2="1"><stop offset="0" stopColor="#4cc8f8" /><stop offset="1" stopColor="#0067c8" /></linearGradient></defs>
            <path d="M0 1q0-1 1-1h13v14H0zM15 0h13q1 0 1 1v13H15zM0 15h14v14H1q-1 0-1-1zM15 15h14v13q0 1-1 1H15z" fill="url(#win)" />
          </svg>
        </button>
        <label className="ml-[18px] mr-2 flex h-10 w-[272px] items-center rounded-full border-b border-[#bfc4d2] bg-[#f4f6fd] pl-[14px] pr-[10px]">
          <svg className="shrink-0" width="19" height="19" viewBox="0 0 19 19" fill="none" stroke="#202020" strokeWidth="2"><circle cx="8" cy="8" r="6.700" /><path d="M13 13l5 5" /></svg>
          <input type="text" aria-label="検索" placeholder="検索" className="ml-3 min-w-0 flex-1 bg-transparent text-[17px] placeholder:text-[#505460]" />
          <svg width="52" height="28" viewBox="0 0 52 28">
            <path d="M1 1h23v26H1z" fill="#f6e6cc" stroke="#d8a868" strokeDasharray="2 1.500" /><path d="M28 1h23v26H28z" fill="#f6e6cc" stroke="#d8a868" strokeDasharray="2 1.500" />
            <path d="M4 4h17v20H4z" fill="#f8dcc0" /><path d="M31 4h17v20H31z" fill="#4a7a30" />
            <circle cx="12.500" cy="12" r="5.500" fill="#ee6080" /><circle cx="12.500" cy="12" r="2.500" fill="#c83058" /><path d="M12.500 17v7M8 18q1 5 4.500 5 3.500 0 4.500-5" stroke="#3a9048" strokeWidth="1.800" fill="none" />
            <circle cx="39.500" cy="14" r="5.500" fill="none" stroke="#f0b020" strokeWidth="4" strokeDasharray="2.500 1" /><circle cx="39.500" cy="14" r="4" fill="#5a2c10" />
          </svg>
        </label>
        <div className="flex items-center gap-[7px]">
          {APPS.map((a) => (
            <button key={a.name} aria-label={a.name} className={`flex h-[50px] w-12 flex-col items-center justify-end rounded ${a.active ? "bg-[#eef0f9]" : ""}`}>
              <svg width="32" height="32" viewBox="0 0 32 32">{a.art}</svg>
              <span className={`mb-[1px] mt-[6px] h-1 rounded-full ${a.active ? "w-5 bg-[#0078d4]" : a.dot ? "w-2 bg-[#868b98]" : "w-2"}`} />
            </button>
          ))}
        </div>
      </div>
      <div className="flex flex-[520] items-center justify-end pr-6">
        <button aria-label="隠れているアイコン"><svg width="14" height="9" viewBox="0 0 14 9" fill="none" stroke="#202020" strokeWidth="1.600"><path d="M1 8l6-6 6 6" /></svg></button>
        <button aria-label="OneDrive" className="ml-[22px]">
          <svg width="22" height="19" viewBox="0 0 22 19"><path d="M5 14a4.500 4.500 0 01-.5-9 6 6 0 0111-1 5 5 0 014 5v5z" fill="#909090" stroke="#303030" strokeWidth="1.400" /><circle cx="15.500" cy="12.500" r="6" fill="#d02c34" /><path d="M13.300 10.300l4.400 4.400M17.700 10.300l-4.400 4.400" stroke="#fff" strokeWidth="1.500" /></svg>
        </button>
        <button aria-label="マイク" className="ml-[21px]"><svg width="14" height="20" viewBox="0 0 14 20" fill="none" stroke="#1a5aa8" strokeWidth="1.600"><rect x="4" y="1" width="6" height="12" rx="3" fill="#a8c4ea" /><path d="M1 9v1a6 6 0 0012 0V9M7 16v4" /></svg></button>
        <button aria-label="入力モード" className="ml-6"><svg width="17" height="20" viewBox="0 0 17 20" fill="none" stroke="#202020" strokeWidth="1.300"><path d="M1 20L8.500 1 16 20M4 13h9" /></svg></button>
        <button aria-label="ネットワークと音量" className="ml-6 flex items-center gap-[10px]">
          <svg width="20" height="16" viewBox="0 0 20 16" fill="none" stroke="#202020" strokeWidth="1.400"><path d="M1 6a12.500 12.500 0 0118 0M4 9a8.500 8.500 0 0112 0M7 12a4.500 4.500 0 016 0" /><circle cx="10" cy="14" r="1.300" fill="#202020" /></svg>
          <svg width="20" height="15" viewBox="0 0 20 15" fill="none" stroke="#202020" strokeWidth="1.200"><path d="M1 5h3l4-4v13l-4-4H1zM12 5l5 5M17 5l-5 5" /></svg>
          <svg width="21" height="13" viewBox="0 0 21 13"><rect x="1" y="1" width="16" height="11" rx="2.500" fill="none" stroke="#202020" strokeWidth="1.500" /><path d="M3 3h7v7H3z" fill="#202020" /><path d="M18.500 4.500q2 2 0 4z" fill="#202020" stroke="#202020" /></svg>
        </button>
        <time className="ml-5 whitespace-nowrap text-right text-[14px] leading-5">10:50<br />2024/09/04</time>
        <button aria-label="通知" className="ml-[11px]"><svg width="17" height="19" viewBox="0 0 17 19" fill="#0a4a9c"><path d="M8.500 0a6 6 0 016 6v5l2 4H.5l2-4V6a6 6 0 016-6zM6 16.500h5a2.500 2.500 0 01-5 0z" /></svg></button>
        <button aria-label="Copilot" className="ml-[22px]">
          <svg width="32" height="30" viewBox="0 0 32 30"><path d="M8 2h10l4 5-7 18H5q-4 0-4-4L5 6q1-4 3-4z" fill="#2b9ae0" /><path d="M1 19q0 6 5 6h7l4-14H5z" fill="#60c860" /><path d="M18 2q-4 0-6 7h15q-2-7-9-7z" fill="#1c58b8" /><path d="M17 9h9q4 0 3 5l-3 9H12z" fill="#d868d0" /><rect x="6" y="17" width="24" height="12" rx="2" fill="#fdd028" /><text x="18" y="27" textAnchor="middle" fontSize="10" fontWeight="700" fontFamily="Open Sans">PRE</text></svg>
        </button>
      </div>
    </div>
  );
}

export default function App() {
  return (
    <div className="flex h-screen w-full flex-col overflow-hidden bg-[#161616] font-['Noto_Sans_CJK_JP','Noto_Sans',sans-serif] text-[13px] leading-5 [font-feature-settings:'palt']">
      <TitleBar />
      <MenuBar />
      <ToolBar />
      <main className="mb-[3px] mt-1 flex min-h-0 flex-1 gap-[6px]">
        <aside className="flex w-[247px] shrink-0 flex-col gap-[6px]">
          <FilesPanel />
          <MediaPanel />
          <HistoryPanel />
        </aside>
        <div className="flex min-w-0 flex-1 flex-col gap-[6px]">
          <div className="flex min-h-0 flex-1 gap-[6px]">
            <Editor />
            <FrequencyPanel />
            <EssentialPanel />
          </div>
          <div className="flex h-[116px] shrink-0 gap-[6px]">
            <LevelMeter />
            <SelectionPanel />
          </div>
        </div>
      </main>
      <StatusBar />
      <TaskBar />
    </div>
  );
}
